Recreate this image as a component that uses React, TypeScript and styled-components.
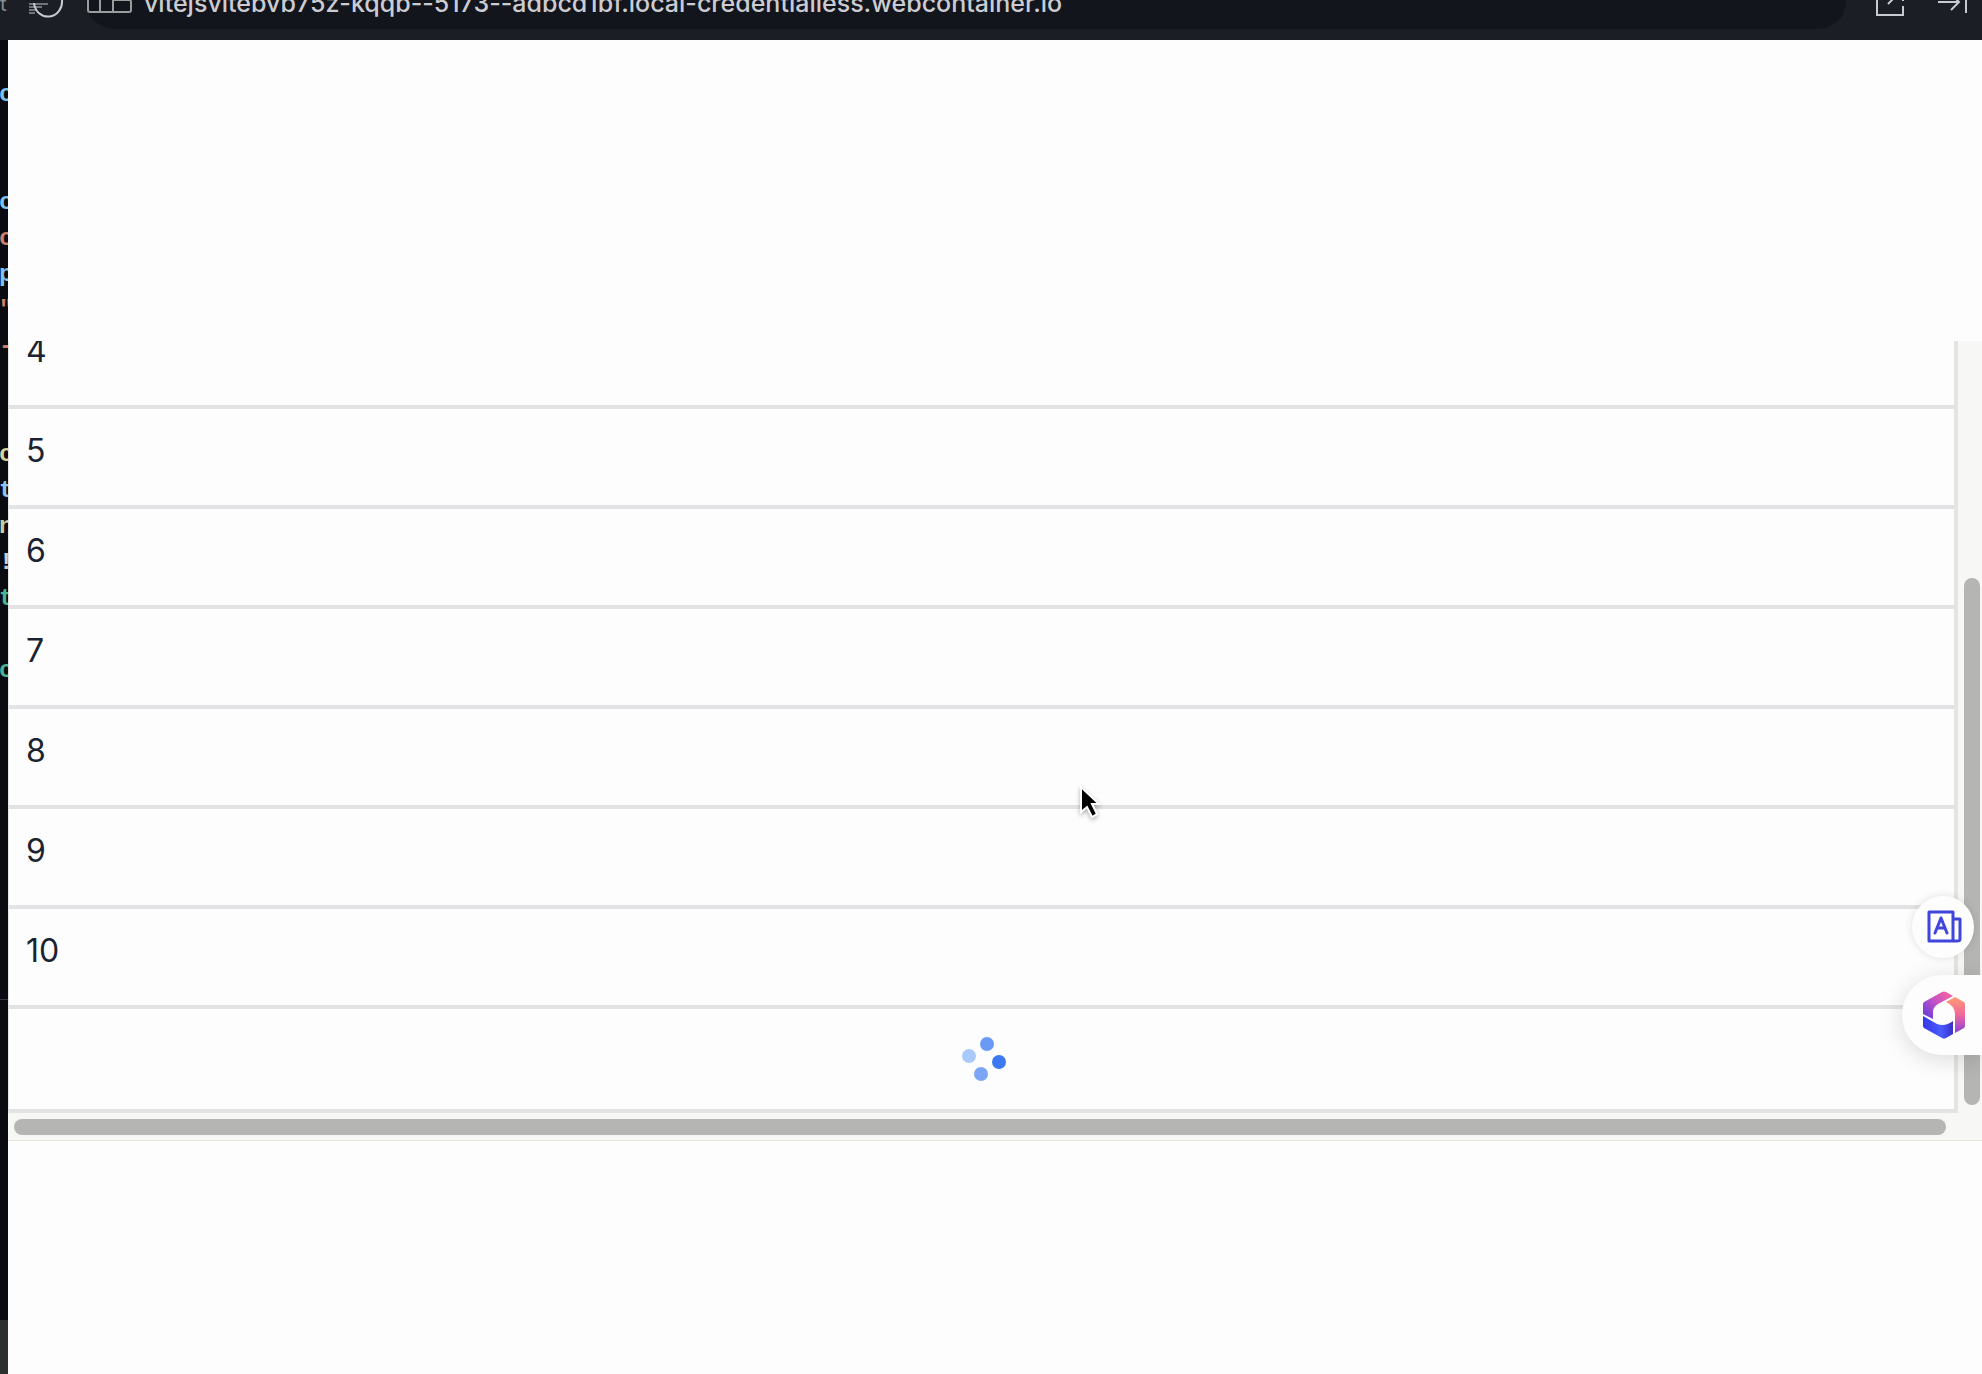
import React from 'react';
import styled, { createGlobalStyle } from 'styled-components';

const Global = createGlobalStyle`
  * { box-sizing: border-box; }
  body { margin: 0; background: #fdfdfd; font-family: Inter, "Liberation Sans", sans-serif; color: #1b2330; }
`;

const Screen = styled.div`
  display: grid;
  grid-template-columns: 8px minmax(0, 1fr);
  grid-template-rows: 40px minmax(0, 1fr);
  height: 100vh;
  overflow: hidden;
`;

const TopBar = styled.header`
  grid-column: 1 / -1;
  display: flex;
  align-items: flex-end;
  background: #1c1e25;
  overflow: hidden;
`;

const TabLabel = styled.span`
  flex: none;
  width: 8px;
  height: 40px;
  margin-right: 78px;
  overflow: hidden;
  white-space: nowrap;
  color: #8a8b90;
  font-size: 20px;
  line-height: 8px;
`;

const AddressField = styled.div`
  flex: 1;
  display: flex;
  align-items: center;
  gap: 8px;
  height: 56px;
  margin-bottom: 11px;
  background: #13151d;
  border-radius: 28px;
`;

const AddressInput = styled.input`
  flex: 1;
  min-width: 0;
  height: 40px;
  margin-top: 4px;
  padding: 0;
  border: 0;
  outline: 0;
  background: transparent;
  color: #cbccd2;
  font: 500 25px/40px Inter, "Liberation Sans", sans-serif;
`;

const BarButton = styled.button`
  display: flex;
  flex: none;
  padding: 0;
  border: 0;
  background: none;
  color: #c9cad0;
`;

const Reload = styled(BarButton)`
  position: absolute;
  top: 0;
  left: 28px;
`;

const BarActions = styled.div`
  display: flex;
  gap: 34px;
  padding: 0 14px 24px 30px;
`;

const EditorStrip = styled.aside`
  display: flex;
  flex-direction: column;
  overflow: hidden;
  background: #0a0b10;
  font: 700 24px/36px "Liberation Mono", monospace;
`;

const CodeArea = styled.div`
  flex: 1;
  min-height: 0;
  padding-top: 37px;
  overflow: hidden;
`;

const TerminalPanel = styled.div`
  flex: none;
  height: 375px;
  border-top: 1px solid #3b3448;
  border-bottom: 54px solid #2c302f;
`;

const CodeLine = styled.code<{ $color: string }>`
  display: block;
  height: 36px;
  margin-left: -1px;
  font: inherit;
  white-space: pre;
  color: ${(p) => p.$color};
`;

const Page = styled.main`
  padding-top: 301px;
  background: #fdfdfd;
`;

const ScrollFrame = styled.section`
  display: grid;
  grid-template-columns: minmax(0, 1fr) 24px;
  grid-template-rows: 772px 27px;
  background: #f7f7f6;
  border-bottom: 1px solid #e6e6dc;
`;

const List = styled.ul`
  display: flex;
  flex-direction: column;
  justify-content: flex-end;
  margin: 0;
  padding: 0;
  overflow: hidden;
  list-style: none;
  background: #fdfdfd;
  border: solid #e4e4e2;
  border-width: 0 4px 0 1px;
`;

const Row = styled.li`
  flex: none;
  height: 100px;
  padding: 18px 17px;
  border-bottom: 4px solid #e3e3e6;
  font-size: 32px;
  line-height: 48px;
`;

const LoadingRow = styled(Row)`
  display: flex;
  align-items: center;
  justify-content: center;
  height: 104px;
`;

const VerticalTrack = styled.div`
  display: flex;
  align-items: flex-end;
  justify-content: flex-end;
  padding: 0 2px 8px 0;
`;

const VerticalThumb = styled.div`
  width: 16px;
  height: 69%;
  border-radius: 8px;
  background: #b5b5b4;
`;

const HorizontalTrack = styled.div`
  padding: 6px 12px 5px 6px;
`;

const HorizontalThumb = styled.div`
  height: 16px;
  border-radius: 8px;
  background: #b5b5b4;
`;

const Pointer = styled.svg`
  position: absolute;
  left: 1078px;
  top: 783px;
  filter: drop-shadow(0 2px 2px rgba(0, 0, 0, 0.3));
`;

const FloatingTools = styled.div`
  position: absolute;
  right: 0;
  top: 896px;
  display: flex;
  flex-direction: column;
  align-items: flex-end;
  gap: 17px;
`;

const RoundButton = styled.button`
  display: flex;
  align-items: center;
  justify-content: center;
  width: 62px;
  height: 62px;
  margin-right: 8px;
  padding: 0 0 0 2px;
  border: 0;
  border-radius: 50%;
  background: #fdfdfd;
  box-shadow: 0 0 8px rgba(0, 0, 0, 0.12);
`;

const TabButton = styled.button`
  display: flex;
  align-items: center;
  width: 80px;
  height: 80px;
  padding: 0 0 0 19px;
  border: 0;
  border-radius: 40px 0 0 40px;
  background: #fdfdfd;
  box-shadow: 0 4px 24px rgba(0, 0, 0, 0.14);
`;

const code = [
  ['c', '#7cc4ee'], ['', ''], ['', ''], ['c', '#7cc4ee'], ['c', '#cf8068'],
  ['p', '#7cc4ee'], ['"', '#cf8068'], ['-', '#cf8068'], ['', ''], ['', ''],
  ['c', '#d8d49c'], ['t', '#8cc4f0'], ['n', '#c9cba0'], ['!', '#d0d0d0'],
  ['t', '#45b695'], ['', ''], ['c', '#45b695'],
];

const items = [4, 5, 6, 7, 8, 9, 10];

function Spinner() {
  return (
    <svg width="48" height="48" viewBox="0 0 48 48" role="img" aria-label="Loading">
      <circle cx="29" cy="9" r="7" fill="#6a9af5" />
      <circle cx="11" cy="21" r="7" fill="#a9c9fa" />
      <circle cx="41" cy="27" r="7" fill="#3c78ef" />
      <circle cx="23" cy="39" r="7" fill="#7ba6f6" />
    </svg>
  );
}

function HexLogo() {
  return (
    <svg width="50" height="50" viewBox="0 0 50 50" aria-hidden="true">
      <defs>
        <linearGradient id="pink" x1="0" y1="1" x2="1" y2="0">
          <stop offset="0" stopColor="#5838d8" />
          <stop offset="0.5" stopColor="#c252c8" />
          <stop offset="1" stopColor="#ff6498" />
        </linearGradient>
        <linearGradient id="warm" x1="0" y1="0" x2="0" y2="1">
          <stop offset="0" stopColor="#ff9c74" />
          <stop offset="0.5" stopColor="#f0689c" />
          <stop offset="1" stopColor="#8a3ce0" />
        </linearGradient>
        <linearGradient id="blue" x1="0" y1="0" x2="1" y2="0">
          <stop offset="0" stopColor="#3437e8" />
          <stop offset="0.6" stopColor="#4a5cff" />
          <stop offset="1" stopColor="#3a30c8" />
        </linearGradient>
      </defs>
      <path d="M2 14Q2 13 3 12L21 2Q23 1 25 2L32 6 17 14Q12 17 12 22V29L2 24Z" fill="url(#pink)" />
      <path d="M34 7 43 12Q44 13 44 14V36Q44 37 43 38L34 43V24Q34 16 25 12Z" fill="url(#warm)" />
      <path d="M2 26 16 34Q24 37 32 31V44L25 48Q23 49 21 48L3 38Q2 37 2 36Z" fill="url(#blue)" />
    </svg>
  );
}

export default function App() {
  return (
    <>
      <Global />
      <Screen>
        <TopBar>
          <TabLabel>t:</TabLabel>
          <Reload aria-label="Reload">
            <svg width="38" height="20" viewBox="0 0 38 20" fill="none" stroke="currentColor" strokeWidth="2">
              <path d="M34 0A14 15 0 0 1 6 3" />
              <path d="M1 4H20M1 7H14M1 10H8M1 13H7" strokeWidth="1" />
            </svg>
          </Reload>
          <AddressField>
            <svg width="50" height="30" viewBox="0 0 50 30" fill="none" stroke="#9b9c9c" strokeWidth="2" aria-hidden="true">
              <path d="M2 0V24Q2 26 4 26H43Q45 26 45 24V16Q45 14 43 14H27M14 0V26M27 0V26" />
            </svg>
            <AddressInput
              aria-label="Address"
              readOnly
              value="vitejsvitebvb75z-kqqb--5173--adbcd1bf.local-credentialless.webcontainer.io"
            />
          </AddressField>
          <BarActions>
            <BarButton aria-label="Open in new window">
              <svg width="28" height="28" viewBox="0 0 28 28" fill="none" stroke="currentColor" strokeWidth="2">
                <path d="M12 1H1V27H27V18M27 13V11M12 16 26 2M18 1H27V10" />
              </svg>
            </BarButton>
            <BarButton aria-label="Collapse panel">
              <svg width="30" height="28" viewBox="0 0 30 28" fill="none" stroke="currentColor" strokeWidth="2">
                <path d="M0 14H21M13 6 21 14 13 22M28 3V25" />
              </svg>
            </BarButton>
          </BarActions>
        </TopBar>
        <EditorStrip>
          <CodeArea>
            {code.map(([text, color], i) => (
              <CodeLine key={i} $color={color}>{text}</CodeLine>
            ))}
          </CodeArea>
          <TerminalPanel />
        </EditorStrip>
        <Page>
          <ScrollFrame>
            <List>
              {items.map((n) => <Row key={n}>{n}</Row>)}
              <LoadingRow><Spinner /></LoadingRow>
            </List>
            <VerticalTrack><VerticalThumb /></VerticalTrack>
            <HorizontalTrack><HorizontalThumb /></HorizontalTrack>
          </ScrollFrame>
        </Page>
      </Screen>
      <Pointer width="24" height="38" viewBox="0 0 24 38">
        <path d="M3 4V29L9 24 14 34 19 31 14 21H21Z" fill="#000" stroke="#fff" strokeWidth="2" />
      </Pointer>
      <FloatingTools>
        <RoundButton aria-label="Translate">
          <svg width="36" height="34" viewBox="0 0 36 34" fill="none" stroke="#4045dc" strokeWidth="3" strokeLinejoin="round" strokeLinecap="round">
            <path d="M3 2H27V31H3ZM27 9H34V29Q34 31 31 31H27M9 23 15 8 21 23M11 18H19" />
          </svg>
        </RoundButton>
        <TabButton aria-label="Assistant"><HexLogo /></TabButton>
      </FloatingTools>
    </>
  );
}
